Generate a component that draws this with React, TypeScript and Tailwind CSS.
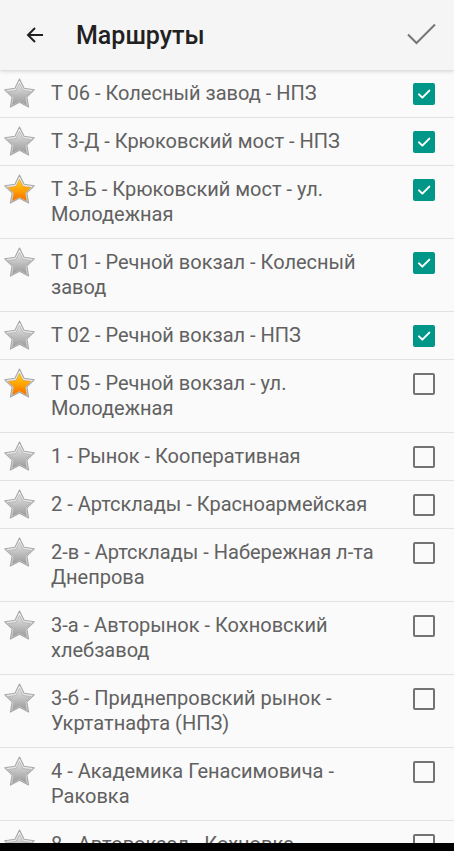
import React from "react";

type Route = { name: string; fav: boolean; checked: boolean };

const routes: Route[] = [
  { name: "Т 06 - Колесный завод - НПЗ", fav: false, checked: true },
  { name: "Т 3-Д - Крюковский мост - НПЗ", fav: false, checked: true },
  { name: "Т 3-Б - Крюковский мост - ул. Молодежная", fav: true, checked: true },
  { name: "Т 01 - Речной вокзал - Колесный завод", fav: false, checked: true },
  { name: "Т 02 - Речной вокзал - НПЗ", fav: false, checked: true },
  { name: "Т 05 - Речной вокзал - ул. Молодежная", fav: true, checked: false },
  { name: "1 - Рынок - Кооперативная", fav: false, checked: false },
  { name: "2 - Артсклады - Красноармейская", fav: false, checked: false },
  { name: "2-в - Артсклады - Набережная л-та Днепрова", fav: false, checked: false },
  { name: "3-а - Авторынок - Кохновский хлебзавод", fav: false, checked: false },
  { name: "3-б - Приднепровский рынок - Укртатнафта (НПЗ)", fav: false, checked: false },
  { name: "4 - Академика Генасимовича - Раковка", fav: false, checked: false },
  { name: "8 - Автовокзал - Кохновка", fav: false, checked: false },
];

const STAR = "16,2 20.41,10.93 30.27,12.36 23.13,19.32 24.82,29.14 16,24.5 7.18,29.14 8.87,19.32 1.73,12.36 11.59,10.93";

function Star({ fav, id }: { fav: boolean; id: number }) {
  const ring = `ring${id}`;
  const inner = `inner${id}`;
  return (
    <svg width="33" height="33" viewBox="0 0 32 32">
      <defs>
        <linearGradient id={ring} x1="0" y1="0" x2="0" y2="1">
          <stop offset="0" stopColor="#f6f6f6" />
          <stop offset="1" stopColor="#cfcfcf" />
        </linearGradient>
        <linearGradient id={inner} x1="0" y1="0" x2="0" y2="1">
          {fav ? (
            <>
              <stop offset="0" stopColor="#ffd21a" />
              <stop offset="0.6" stopColor="#ff9a00" />
              <stop offset="1" stopColor="#ff6a00" />
            </>
          ) : (
            <>
              <stop offset="0" stopColor="#e4e4e4" />
              <stop offset="0.6" stopColor="#b8b8b8" />
              <stop offset="1" stopColor="#9c9c9c" />
            </>
          )}
        </linearGradient>
      </defs>
      <polygon points={STAR} fill={`url(#${ring})`} stroke="#a8a8a8" strokeWidth="1.1" strokeLinejoin="round" />
      <g transform="translate(16 17.6) scale(0.76) translate(-16 -17)">
        <polygon points={STAR} fill={`url(#${inner})`} stroke={fav ? "#e08a00" : "#a0a0a0"} strokeWidth="0.7" strokeLinejoin="round" />
      </g>
    </svg>
  );
}

function Checkbox({ checked }: { checked: boolean }) {
  if (checked) {
    return (
      <div className="w-[22px] h-[22px] rounded-[2px] bg-[#009688] flex items-center justify-center">
        <svg width="16" height="16" viewBox="0 0 24 24">
          <path d="M4.5 12.5l5 5L20 7" fill="none" stroke="#fff" strokeWidth="3" strokeLinecap="round" strokeLinejoin="round" />
        </svg>
      </div>
    );
  }
  return <div className="w-[22px] h-[22px] rounded-[2px] border-2 border-[#737373]" />;
}

export default function App() {
  return (
    <div
      className="w-[454px] h-[851px] flex flex-col overflow-hidden bg-[#fafafa]"
      style={{ fontFamily: "Roboto, 'Noto Sans', sans-serif" }}
    >
      <div className="h-[70px] shrink-0 bg-[#f5f5f5] flex items-center relative z-10 shadow-[0_1px_4px_rgba(0,0,0,0.18)]">
        <div className="w-[76px] flex items-center pl-[23px]">
          <svg width="24" height="24" viewBox="0 0 24 24">
            <path d="M20 12H5M12 5l-7 7 7 7" fill="none" stroke="#212121" strokeWidth="2" />
          </svg>
        </div>
        <div className="flex-1 text-[25px] font-medium text-[#212121] leading-none">Маршруты</div>
        <div className="pr-[16px]">
          <svg width="32" height="32" viewBox="0 0 32 32">
            <path d="M2 15.5l8.5 8.5L29 5.5" fill="none" stroke="#757575" strokeWidth="2" />
          </svg>
        </div>
      </div>
      <div className="flex-1 overflow-hidden">
        {routes.map((r, i) => (
          <div key={i} className="flex items-start border-b border-[#e2e2e2] py-[11px]">
            <div className="w-[51px] pl-[3px] h-[25px] flex items-center">
              <Star fav={r.fav} id={i} />
            </div>
            <div className="flex-1 text-[20px] leading-[25px] text-[#616161] pr-[20px]">{r.name}</div>
            <div className="w-[41px] h-[25px] flex items-center">
              <Checkbox checked={r.checked} />
            </div>
          </div>
        ))}
      </div>
      <div className="h-[8px] shrink-0 bg-black" />
    </div>
  );
}
